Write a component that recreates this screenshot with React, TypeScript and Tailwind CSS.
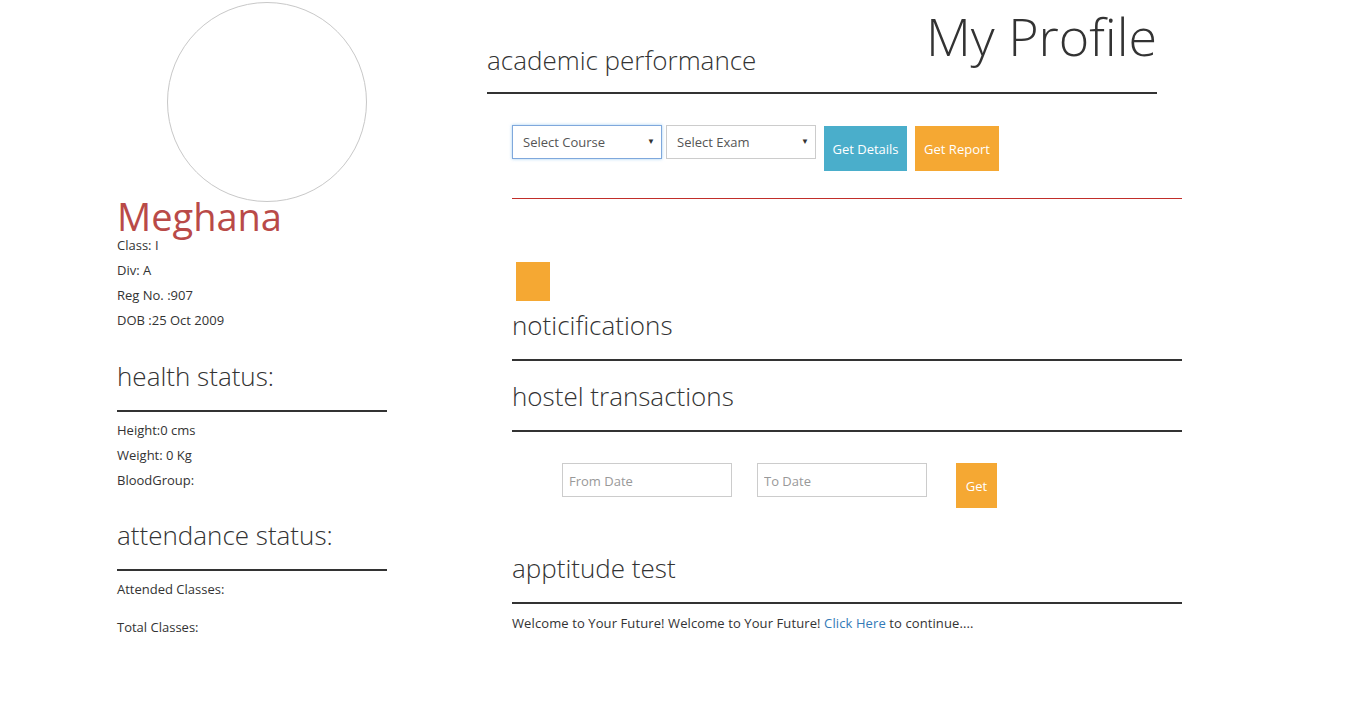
import React from 'react';

const font = { fontFamily: '"Open Sans", "Liberation Sans", sans-serif' };

const SelectBox: React.FC<{ label: string; focused?: boolean }> = ({ label, focused }) => (
  <div
    className={`relative w-[150px] h-[34px] bg-white border ${
      focused ? 'border-[#7fa8dc] shadow-[0_0_3px_rgba(102,175,233,0.6)]' : 'border-[#cccccc]'
    }`}
  >
    <select className="appearance-none w-full h-full bg-transparent pl-[10px] pr-6 pt-[2px] text-[13px] text-[#555] outline-none">
      <option>{label}</option>
    </select>
    <span className="pointer-events-none absolute right-[6px] top-[9px] text-[8px] text-[#333]">▼</span>
  </div>
);

const Heading: React.FC<{ children: React.ReactNode; className?: string }> = ({ children, className }) => (
  <h2
    className={`text-[26px] leading-[30px] font-light text-[#333] border-b-2 border-[#333] pb-[19px] ${className ?? ''}`}
  >
    {children}
  </h2>
);

const App: React.FC = () => {
  return (
    <div className="min-h-[728px] bg-white text-[#333] flex" style={font}>
      {/* left column */}
      <div className="ml-[117px] w-[270px] shrink-0">
        <div className="mt-[2px] ml-[50px] w-[200px] h-[200px] rounded-full border border-[#c8c8c8]" />
        <div className="-mt-[3px] text-[38px] leading-[34px] text-[#b94a48]">Meghana</div>
        <div className="text-[13px] leading-[25px]">
          <p>Class: I</p>
          <p>Div: A</p>
          <p>Reg No. :907</p>
          <p>DOB :25 Oct 2009</p>
        </div>

        <Heading className="mt-[28px]">health status:</Heading>
        <div className="mt-[6px] text-[13px] leading-[25px]">
          <p>Height:0 cms</p>
          <p>Weight: 0 Kg</p>
          <p>BloodGroup:</p>
        </div>

        <Heading className="mt-[27px]">attendance status:</Heading>
        <div className="mt-[6px] text-[13px] leading-[25px]">
          <p>Attended Classes:</p>
          <p className="mt-[13px]">Total Classes:</p>
        </div>
      </div>

      {/* right column */}
      <div className="ml-[100px] w-[695px] shrink-0">
        <div className="mt-[8px] w-[670px] flex justify-between items-start border-b-2 border-[#333] pb-[17px]">
          <h2 className="mt-[37px] text-[26px] leading-[30px] font-light">academic performance</h2>
          <h1 className="-mt-[2px] text-[52px] leading-[60px] font-light">My Profile</h1>
        </div>

        <div className="pl-[25px]">
          <div className="mt-[31px] flex items-start">
            <SelectBox label="Select Course" focused />
            <div className="ml-[4px]">
              <SelectBox label="Select Exam" />
            </div>
            <button className="ml-[8px] mt-[1px] pt-[2px] w-[83px] h-[45px] bg-[#4aaecb] text-white text-[13px]">
              Get Details
            </button>
            <button className="ml-[8px] mt-[1px] pt-[2px] w-[84px] h-[45px] bg-[#f5a833] text-white text-[13px]">
              Get Report
            </button>
          </div>

          <div className="mt-[27px] w-[670px] border-t border-[#c12e2a]" />

          <div className="mt-[63px] ml-[4px] w-[34px] h-[39px] bg-[#f5a833]" />

          <Heading className="mt-[9px] w-[670px]">noticifications</Heading>
          <Heading className="mt-[20px] w-[670px]">hostel transactions</Heading>

          <div className="mt-[31px] ml-[50px] flex items-start">
            <input
              placeholder="From Date"
              className="w-[170px] h-[34px] border border-[#cccccc] px-[6px] pt-[2px] text-[13px] placeholder:text-[#999] outline-none"
            />
            <input
              placeholder="To Date"
              className="ml-[25px] w-[170px] h-[34px] border border-[#cccccc] px-[6px] pt-[2px] text-[13px] placeholder:text-[#999] outline-none"
            />
            <button className="ml-[29px] pt-[2px] w-[41px] h-[45px] bg-[#f5a833] text-white text-[13px]">Get</button>
          </div>

          <Heading className="mt-[45px] w-[670px]">apptitude test</Heading>
          <p className="mt-[9px] text-[13px] leading-[20px] tracking-[0.1px]">
            Welcome to Your Future! Welcome to Your Future!{' '}
            <a href="#" className="text-[#337ab7]">
              Click Here
            </a>{' '}
            to continue....
          </p>
        </div>
      </div>
    </div>
  );
};

export default App;
